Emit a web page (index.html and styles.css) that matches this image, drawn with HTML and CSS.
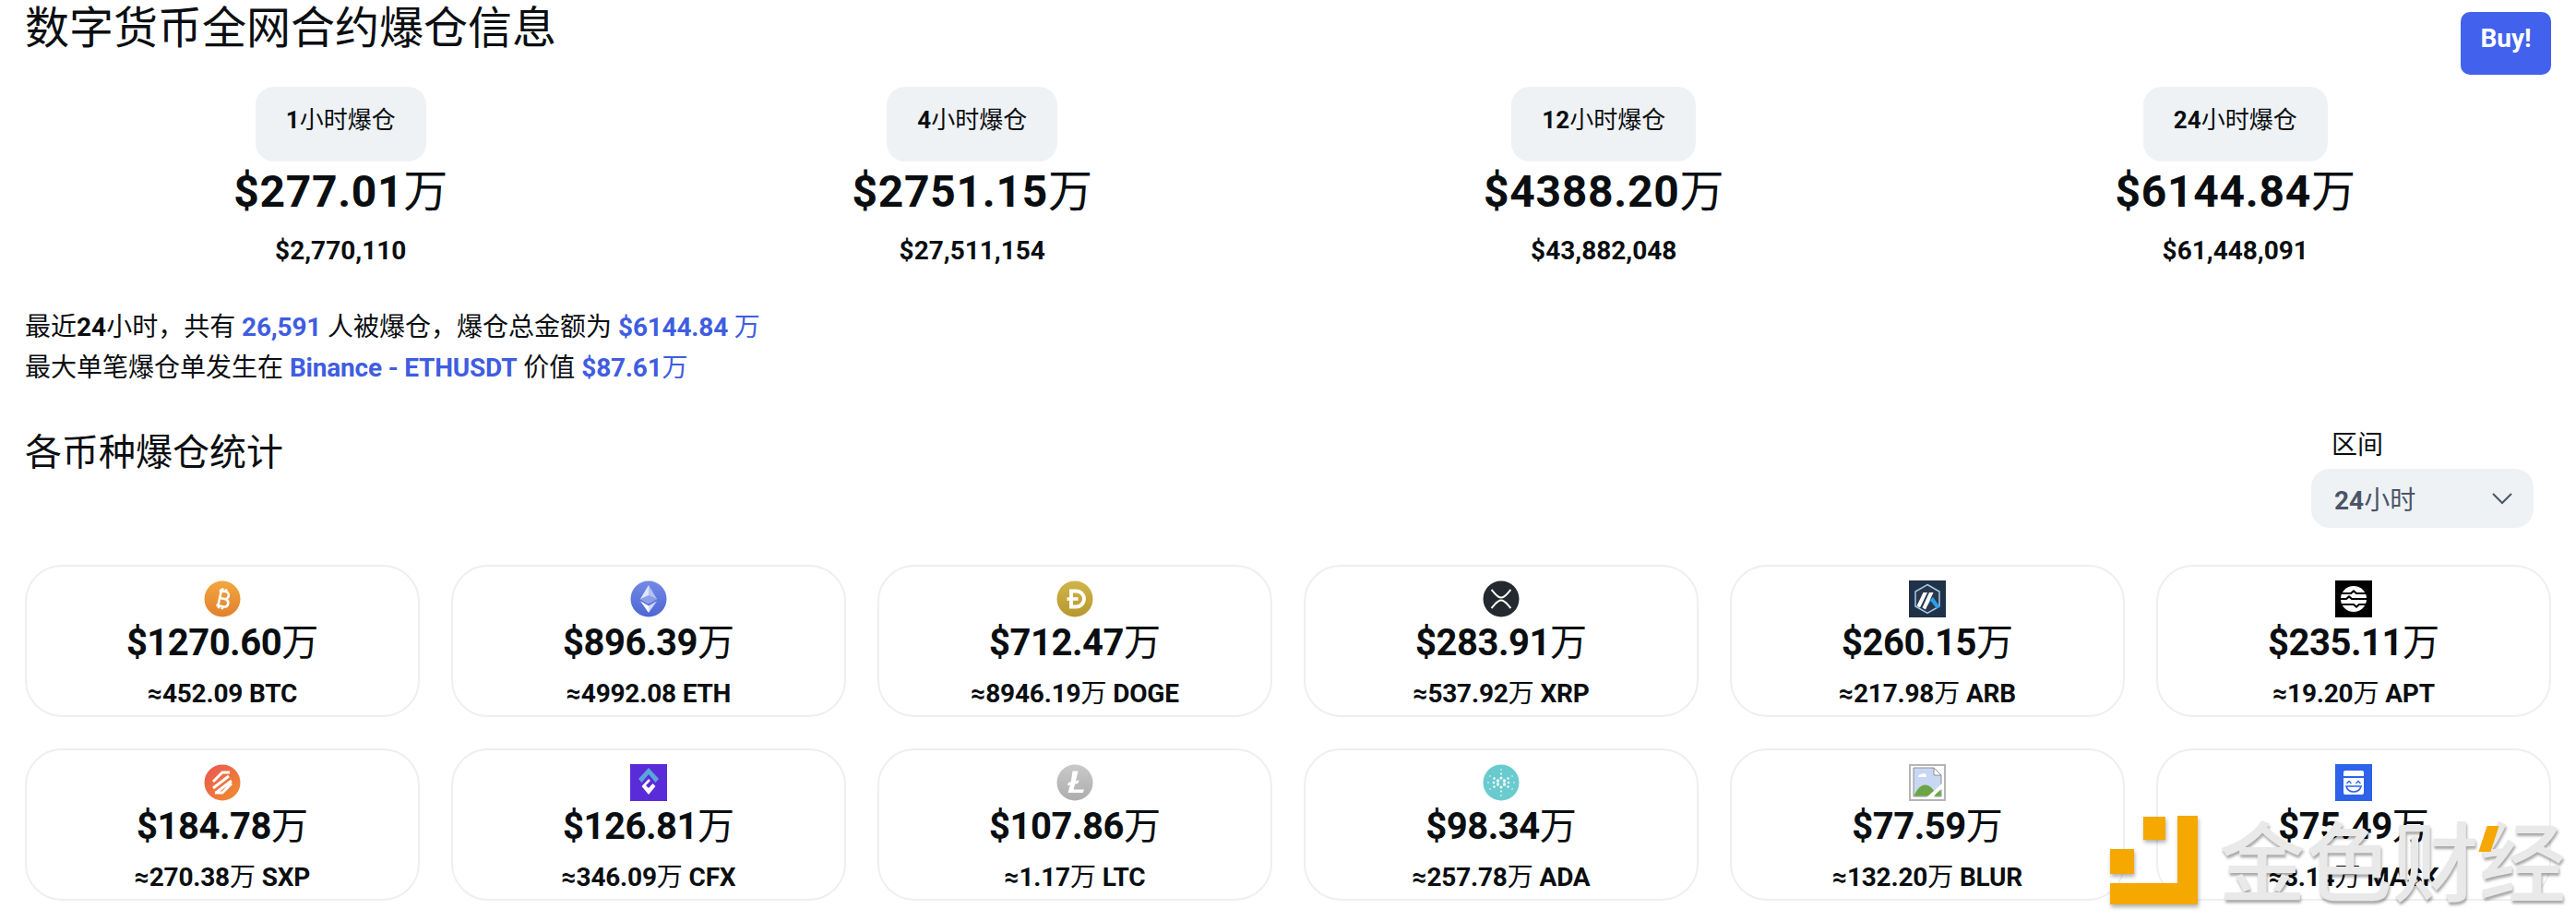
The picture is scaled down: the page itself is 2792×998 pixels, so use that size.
FILE: index.html
```html
<!DOCTYPE html>
<html lang="zh-CN">
<head>
<meta charset="utf-8">
<title>数字货币全网合约爆仓信息</title>
<link rel="stylesheet" href="styles.css">
</head>
<body>
<main class="page">
  <h1 class="title">数字货币全网合约爆仓信息</h1>
  <button class="buy">Buy!</button>

  <section class="stats">
    <div class="stat"><div class="tab"><b>1</b>小时爆仓</div><div class="amount">$277.01<span class="unit">万</span></div><div class="exact">$2,770,110</div></div>
    <div class="stat"><div class="tab"><b>4</b>小时爆仓</div><div class="amount">$2751.15<span class="unit">万</span></div><div class="exact">$27,511,154</div></div>
    <div class="stat"><div class="tab"><b>12</b>小时爆仓</div><div class="amount">$4388.20<span class="unit">万</span></div><div class="exact">$43,882,048</div></div>
    <div class="stat"><div class="tab"><b>24</b>小时爆仓</div><div class="amount">$6144.84<span class="unit">万</span></div><div class="exact">$61,448,091</div></div>
  </section>

  <section class="summary">
    <p>最近<b>24</b>小时，共有 <a class="hl">26,591</a> 人被爆仓，爆仓总金额为 <a class="hl">$6144.84 <span class="unit">万</span></a></p>
    <p>最大单笔爆仓单发生在 <a class="hl">Binance - ETHUSDT</a> 价值 <a class="hl">$87.61<span class="unit">万</span></a></p>
  </section>

  <section class="head">
    <h2 class="subtitle">各币种爆仓统计</h2>
    <div class="filter">
      <label class="filter-label">区间</label>
      <div class="select"><span><b>24</b>小时</span>
        <svg class="chev" viewBox="0 0 24 24" width="24" height="24"><path d="M2 7l10 10L22 7" fill="none" stroke="#4a5568" stroke-width="2"/></svg>
      </div>
    </div>
  </section>

  <section class="grid">
    <article class="card">
      <svg class="icon" viewBox="0 0 40 40"><defs><linearGradient id="gb" x1="0" y1="0" x2="0" y2="1"><stop offset="0" stop-color="#f3a73e"/><stop offset="1" stop-color="#e2802e"/></linearGradient></defs><circle cx="20" cy="20" r="19.5" fill="url(#gb)"/><g transform="rotate(12 20 20)" fill="none" stroke="#fff"><path d="M15 11.5h7a4 4 0 0 1 0 8h-6m0 0h7.5a4.3 4.3 0 0 1 0 8.5H15M17 11.5v17M18 8.5v3M22 8.5v3M18 28v3M22 28v3" stroke-width="2.6"/></g></svg>
      <div class="value">$1270.60<span class="unit">万</span></div><div class="qty">≈452.09 BTC</div>
    </article>
    <article class="card">
      <svg class="icon" viewBox="0 0 40 40"><defs><linearGradient id="ge" x1="0" y1="0" x2="0" y2="1"><stop offset="0" stop-color="#7389e6"/><stop offset="1" stop-color="#4d66d3"/></linearGradient></defs><circle cx="20" cy="20" r="19.5" fill="url(#ge)"/><path d="M20 5l-9 15 9 5.3z" fill="#dfe5fb"/><path d="M20 5l9 15-9 5.3z" fill="#b4c1f3"/><path d="M20 16l-9 4 9 5.3 9-5.3z" fill="#8b9eea"/><path d="M11 22.2L20 35V27.5z" fill="#fff"/><path d="M29 22.2L20 35V27.5z" fill="#d3dbf9"/></svg>
      <div class="value">$896.39<span class="unit">万</span></div><div class="qty">≈4992.08 ETH</div>
    </article>
    <article class="card">
      <svg class="icon" viewBox="0 0 40 40"><defs><linearGradient id="gd" x1="0" y1="0" x2="0" y2="1"><stop offset="0" stop-color="#d0b44a"/><stop offset="1" stop-color="#b7982f"/></linearGradient></defs><circle cx="20" cy="20" r="19.5" fill="url(#gd)"/><path d="M14 9.500h7.500a10.500 10.500 0 0 1 0 21H14zM18 13.500v13h3.500a6.500 6.500 0 0 0 0-13z" fill="#fff" fill-rule="evenodd"/><path d="M11.500 18.200h12v3.600h-12z" fill="#fff"/></svg>
      <div class="value">$712.47<span class="unit">万</span></div><div class="qty">≈8946.19<span class="unit">万</span> DOGE</div>
    </article>
    <article class="card">
      <svg class="icon" viewBox="0 0 40 40"><circle cx="20" cy="20" r="19.5" fill="#23292f"/><path d="M9.500 10c4 4 6 8.500 10.500 8.500S26.500 14 30.500 10M9.500 30c4-4 6-8.500 10.500-8.500S26.500 26 30.500 30" fill="none" stroke="#fff" stroke-width="2"/></svg>
      <div class="value">$283.91<span class="unit">万</span></div><div class="qty">≈537.92<span class="unit">万</span> XRP</div>
    </article>
    <article class="card">
      <svg class="icon" viewBox="0 0 40 40"><rect width="40" height="40" fill="#213147"/><path d="M20 4.500l13 7.500v16L20 35.500 7 28V12z" fill="#2c374b" stroke="#9dcced" stroke-width="1.500"/><path d="M26 18l7.500 10.500-3.500 2-6.500-8.500-3 5-1.500-2z" fill="#28a0f0"/><path d="M15.500 13h4.500L12 29.500 8.500 27.500zM22 13h4.500L18 31.500 14.500 29.500z" fill="#fff"/></svg>
      <div class="value">$260.15<span class="unit">万</span></div><div class="qty">≈217.98<span class="unit">万</span> ARB</div>
    </article>
    <article class="card">
      <svg class="icon" viewBox="0 0 40 40"><rect width="40" height="40" fill="#000"/><circle cx="20" cy="20" r="14" fill="#fff"/><path d="M4 14h13l3-2.500 3 2.500h13M4 20h8l3-2.500 3 2.500h18M4 26h16l3 2.500 3-2.500h10" fill="none" stroke="#000" stroke-width="2.200"/></svg>
      <div class="value">$235.11<span class="unit">万</span></div><div class="qty">≈19.20<span class="unit">万</span> APT</div>
    </article>
    <article class="card">
      <svg class="icon" viewBox="0 0 40 40"><defs><linearGradient id="gs" x1="0" y1="0" x2="1" y2="1"><stop offset="0" stop-color="#ea5452"/><stop offset="1" stop-color="#f0902e"/></linearGradient></defs><circle cx="20" cy="20" r="19.500" fill="url(#gs)"/><path d="M10 19L20 9h8M10 26L27 13M13 31L30 18M12 31h8l10-10" fill="none" stroke="#fff" stroke-width="3"/></svg>
      <div class="value">$184.78<span class="unit">万</span></div><div class="qty">≈270.38<span class="unit">万</span> SXP</div>
    </article>
    <article class="card">
      <svg class="icon" viewBox="0 0 40 40"><rect width="40" height="40" fill="#5a2bd8"/><path d="M20 4L31 16l-3.500 4L20 11l-7.500 9L9 16z" fill="#58a6dc"/><path d="M20 16l-7.500 8L20 33l7.500-9-3-3-4.500 5-3-3 5-5z" fill="#fff"/></svg>
      <div class="value">$126.81<span class="unit">万</span></div><div class="qty">≈346.09<span class="unit">万</span> CFX</div>
    </article>
    <article class="card">
      <svg class="icon" viewBox="0 0 40 40"><defs><linearGradient id="gl" x1="0" y1="0" x2="0" y2="1"><stop offset="0" stop-color="#c9c9c9"/><stop offset="1" stop-color="#adadad"/></linearGradient></defs><circle cx="20" cy="20" r="19.500" fill="url(#gl)"/><path d="M17.500 7.500h6l-2.600 11 3.600-1.500-1 3.500-3.500 1.400-1.400 5.500H30l-1.200 3.600H12.500l2.400-8.600-3 1.200.9-3.300 3-1.200z" fill="#fff"/></svg>
      <div class="value">$107.86<span class="unit">万</span></div><div class="qty">≈1.17<span class="unit">万</span> LTC</div>
    </article>
    <article class="card">
      <svg class="icon" viewBox="0 0 40 40"><circle cx="20" cy="20" r="19.500" fill="#6acbcf"/><g fill="#fff"><circle cx="20" cy="6" r=".8"/><circle cx="20" cy="34" r=".8"/><circle cx="8" cy="13" r=".8"/><circle cx="32" cy="13" r=".8"/><circle cx="8" cy="27" r=".8"/><circle cx="32" cy="27" r=".8"/><circle cx="20" cy="10.500" r="1"/><circle cx="20" cy="29.500" r="1"/><circle cx="12.500" cy="15.500" r="1.200"/><circle cx="27.500" cy="15.500" r="1.200"/><circle cx="12.500" cy="24.500" r="1.200"/><circle cx="27.500" cy="24.500" r="1.200"/><circle cx="16.500" cy="18" r="1.700"/><circle cx="23.500" cy="18" r="1.700"/><circle cx="16.500" cy="22" r="1.700"/><circle cx="23.500" cy="22" r="1.700"/><circle cx="20" cy="15" r="1.500"/><circle cx="20" cy="25" r="1.500"/><circle cx="12" cy="20" r="1.300"/><circle cx="28" cy="20" r="1.300"/><circle cx="6" cy="20" r=".8"/><circle cx="34" cy="20" r=".8"/></g></svg>
      <div class="value">$98.34<span class="unit">万</span></div><div class="qty">≈257.78<span class="unit">万</span> ADA</div>
    </article>
    <article class="card">
      <svg class="icon" viewBox="0 0 40 40"><rect x="1" y="1" width="38" height="38" fill="#fff" stroke="#b5b5b5" stroke-width="2"/><path d="M5 4h22l8 8v23H5z" fill="#c9d7f4" stroke="#8e8e8e"/><path d="M27 4v8h8z" fill="#fff" stroke="#8e8e8e"/><path d="M10 14a3 3 0 0 1 4-3 3 3 0 0 1 5 3z" fill="#fff"/><path d="M5.500 34.500c3-8 8-12 12-12 5 0 9 4 13 12z" fill="#6da544"/><path d="M18 37L37 20l1 5-13 13z" fill="#fff"/><path d="M27 34.500l7.500-7v7z" fill="#6da544"/></svg>
      <div class="value">$77.59<span class="unit">万</span></div><div class="qty">≈132.20<span class="unit">万</span> BLUR</div>
    </article>
    <article class="card">
      <svg class="icon" viewBox="0 0 40 40"><rect width="40" height="40" fill="#2e62e8"/><path d="M9 9q0-2 2-2h18q2 0 2 2v4H9zM9 15h22v16q0 2-2 2H11q-2 0-2-2z" fill="#fff"/><path d="M12.500 21l2.500-2.500 2.500 2.500M22.500 21l2.500-2.500 2.500 2.500" fill="none" stroke="#2e62e8" stroke-width="1.400"/><path d="M12 24h16c-1 4-4 6-8 6s-7-2-8-6z" fill="none" stroke="#2e62e8" stroke-width="1.600"/></svg>
      <div class="value">$75.49<span class="unit">万</span></div><div class="qty">≈3.14<span class="unit">万</span> MASK</div>
    </article>
  </section>

  <div class="watermark">
    <svg class="wm-logo" viewBox="0 0 95 96" width="95" height="96"><path d="M36 1h24v25H36zM0 36h26v27H0zM73 0h22v96H0V73h73z" fill="#f4a800"/></svg>
    <span class="wm-text">金色财经</span>
    <i class="wm-slash"></i>
  </div>
</main>
</body>
</html>
```
FILE: styles.css
```css
* { box-sizing: border-box; }
html, body { margin: 0; padding: 0; background: #fff; }
body {
  height: 998px;
  overflow: hidden;
  color: #0b0e11;
  font-family: Roboto, "Noto Sans CJK SC", sans-serif;
  font-size: 28px;
}
.page { position: relative; padding: 0 27px; height: 998px; overflow: hidden; }
b { font-weight: 700; }
.title {
  margin: 0;
  height: 94px;
  padding-top: 2px;
  font-size: 48px;
  line-height: 58px;
  font-weight: 400;
  color: #0b0e11;
}
.buy {
  position: absolute;
  top: 13px;
  right: 27px;
  width: 98px;
  height: 68px;
  padding: 0 0 10px;
  border: 0;
  border-radius: 10px;
  background: #4262ee;
  color: #fff;
  font: 700 28px/40px Roboto, sans-serif;
}
.stats { display: grid; grid-template-columns: repeat(4, 1fr); }
.stat { display: flex; flex-direction: column; align-items: center; }
.tab {
  height: 81px;
  padding: 16px 33px 0;
  border-radius: 20px;
  background: #eff2f5;
  font-size: 26px;
  line-height: 40px;
}
.amount {
  height: 66px;
  font-size: 48px;
  line-height: 66px;
  font-weight: 700;
  letter-spacing: 0.7px;
}
.unit { font-weight: 400; letter-spacing: 0; }
.exact {
  margin-top: 11px;
  font-size: 28px;
  line-height: 40px;
  font-weight: 700;
  letter-spacing: 0;
}
.summary { margin-top: 41px; }
.summary p { margin: 0; font-size: 28px; line-height: 44px; }
.hl { color: #3f5de0; font-weight: 700; letter-spacing: -0.2px; }
.head { display: flex; justify-content: space-between; align-items: flex-start; margin-top: 42px; padding-right: 19px; }
.subtitle { margin: 0; font-size: 40px; line-height: 56px; font-weight: 400; }
.filter { width: 241px; }
.filter-label { display: block; padding-left: 22px; font-size: 28px; line-height: 40px; }
.select {
  display: flex;
  align-items: center;
  justify-content: space-between;
  height: 64px;
  margin-top: 5px;
  padding: 0 22px 0 25px;
  border-radius: 20px;
  background: #eff2f5;
  color: #4a5568;
  font-size: 28px;
}
.chev { display: block; }
.grid { display: grid; grid-template-columns: repeat(6, 1fr); gap: 34px; margin-top: 40px; }
.card {
  height: 165px;
  padding-top: 15px;
  border: 2px solid #edeff1;
  border-radius: 40px;
  text-align: center;
}
.icon { display: block; width: 40px; height: 40px; margin: 0 auto; }
.value { height: 56px; font-size: 40px; line-height: 56px; font-weight: 700; letter-spacing: -0.5px; }
.qty { margin-top: 7px; font-size: 28px; line-height: 40px; font-weight: 700; letter-spacing: -0.2px; }
.watermark {
  position: absolute;
  left: 2287px;
  top: 884px;
  width: 500px;
  height: 110px;
}
.wm-logo { position: absolute; left: 0; top: 0; filter: drop-shadow(1px 3px 2px rgba(0,0,0,.3)); }
.wm-text {
  position: absolute;
  left: 118px;
  top: -10px;
  font-family: "Noto Sans CJK SC", sans-serif;
  font-size: 94px;
  line-height: 110px;
  font-weight: 500;
  white-space: nowrap;
  color: #e9e9e9;
  text-shadow: 1px 3px 3px rgba(0,0,0,.35);
}
.wm-slash {
  position: absolute;
  left: 404px;
  top: 11px;
  width: 13px;
  height: 28px;
  background: #f4a800;
  transform: skewX(-18deg);
}
```
